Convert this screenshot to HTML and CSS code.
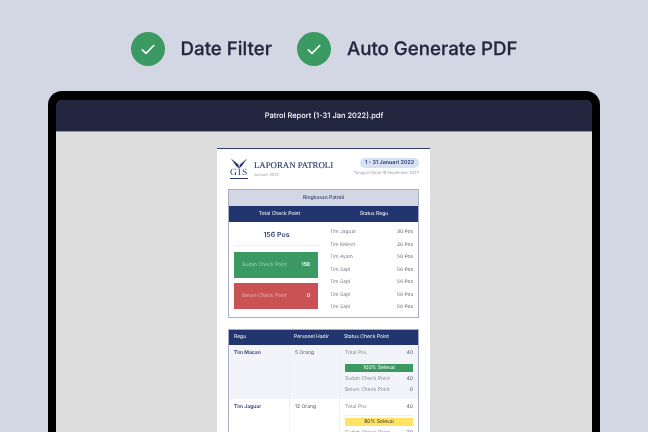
FILE: index.html
```html
<!DOCTYPE html>
<html lang="id">
<head>
<meta charset="utf-8">
<title>Patrol Report</title>
<link rel="stylesheet" href="styles.css">
</head>
<body>
<div class="page">
  <div class="features">
    <div class="feature">
      <svg class="check" viewBox="0 0 34 34"><circle cx="17" cy="17" r="17" fill="#3a9a62"/><path d="M10.800 17.300l4.200 4 8.200-8.300" fill="none" stroke="#fff" stroke-width="1.600"/></svg>
      <span>Date Filter</span>
    </div>
    <div class="feature">
      <svg class="check" viewBox="0 0 34 34"><circle cx="17" cy="17" r="17" fill="#3a9a62"/><path d="M10.800 17.300l4.200 4 8.200-8.300" fill="none" stroke="#fff" stroke-width="1.600"/></svg>
      <span>Auto Generate PDF</span>
    </div>
  </div>
  <div class="device">
    <div class="titlebar"><span>Patrol Report (1-31 Jan 2022).pdf</span></div>
    <div class="viewer">
      <div class="paper">
        <div class="doc-head">
          <div class="logo">
            <svg class="wings" viewBox="0 0 20 11"><path d="M1 0l8.500 6.500L10 11 7 8.500zM19 0l-8 6.500L10 11l3-2.500z" fill="#2b3a75"/></svg>
            <div class="logo-text">GIS</div>
          </div>
          <div class="doc-title">
            <div class="doc-name">LAPORAN PATROLI</div>
            <div class="doc-sub">Januari 2022</div>
          </div>
          <div class="doc-date">
            <div class="pill">1 - 31 Januari 2022</div>
            <div class="doc-sub">Tanggal Cetak 19 September 2022</div>
          </div>
        </div>
        <div class="summary">
          <div class="summary-title">Ringkasan Patroli</div>
          <div class="summary-head"><span>Total Check Point</span><span>Status Regu</span></div>
          <div class="summary-body">
            <div class="totals">
              <div class="total">156 Pos</div>
              <div class="stat stat-done"><span>Sudah Check Point</span><b>156</b></div>
              <div class="stat stat-todo"><span>Belum Check Point</span><b>0</b></div>
            </div>
            <div class="teams">
              <div class="team"><span>Tim Jaguar</span><span>30 Pos</span></div>
              <div class="team"><span>Tim Kelinci</span><span>20 Pos</span></div>
              <div class="team"><span>Tim Ayam</span><span>50 Pos</span></div>
              <div class="team"><span>Tim Sapi</span><span>56 Pos</span></div>
              <div class="team"><span>Tim Sapi</span><span>56 Pos</span></div>
              <div class="team"><span>Tim Sapi</span><span>56 Pos</span></div>
              <div class="team"><span>Tim Sapi</span><span>56 Pos</span></div>
            </div>
          </div>
        </div>
        <div class="detail">
          <div class="detail-row detail-head"><div>Regu</div><div>Personel Hadir</div><div>Status Check Point</div></div>
          <div class="detail-row shaded">
            <div class="name">Tim Macan</div>
            <div>5 Orang</div>
            <div class="status">
              <div class="line line-total"><span>Total Pos</span><i>40</i></div>
              <div class="bar bar-green">100% Selesai</div>
              <div class="line"><span>Sudah Check Point</span><i>40</i></div>
              <div class="line"><span>Belum Check Point</span><i>0</i></div>
            </div>
          </div>
          <div class="detail-row">
            <div class="name">Tim Jaguar</div>
            <div>12 Orang</div>
            <div class="status">
              <div class="line line-total"><span>Total Pos</span><i>40</i></div>
              <div class="bar bar-yellow">80% Selesai</div>
              <div class="line"><span>Sudah Check Point</span><i>30</i></div>
            </div>
          </div>
        </div>
      </div>
    </div>
  </div>
</div>
</body>
</html>
```
FILE: styles.css
```css
* { box-sizing: border-box; }
html, body { margin: 0; height: 100%; overflow: hidden; }
body { background: #d3d7e4; font-family: Inter, "Noto Sans", sans-serif; text-rendering: geometricPrecision; }
.page { height: 432px; overflow: hidden; display: flex; flex-direction: column; align-items: center; }

.features { display: flex; flex: none; gap: 25px; padding-top: 32px; height: 91px; }
.feature { display: flex; align-items: flex-start; gap: 16px; font-size: 18.700px; font-weight: 500; color: #23263f; line-height: 34px; }
.feature span { filter: blur(.15px); -webkit-text-stroke: .25px #23263f; }
.check { width: 34px; height: 34px; display: block; }

.device { width: 552px; flex: none; height: 341px; overflow: hidden; background: #000; border: 8px solid #000; border-bottom: 0; border-radius: 14px 14px 0 0; }
.titlebar { height: 32px; margin-top: 1px; background: #23263f; border-radius: 5px 5px 0 0; color: #fff; font-size: 7.500px; font-weight: 500; display: flex; align-items: center; justify-content: center; border-bottom: 1px solid #8f92a0; }
.titlebar span { filter: blur(.2px); }
.viewer { background: #dcdcdc; height: 400px; padding-top: 16px; display: flex; justify-content: center; }

.paper { width: 213px; margin-right: 1px; height: 400px; background: #fff; border-top: 1px solid #2b3a75; padding: 9px 11px 0; color: #2b3a75; filter: blur(.3px); }
.doc-head { display: flex; align-items: flex-start; height: 31px; }
.logo { width: 18px; margin-left: 2px; display: flex; flex-direction: column; align-items: center; }
.wings { width: 18px; height: 11px; display: block; }
.logo-text { font-family: "Liberation Serif", serif; font-size: 9.500px; line-height: 9px; letter-spacing: 1px; border-bottom: 1px solid #2b3a75; width: 18px; text-align: center; }
.doc-title { margin-left: 6px; flex: 1; padding-top: 2px; }
.doc-name { font-family: "Liberation Serif", serif; font-size: 8.800px; line-height: 10px; -webkit-text-stroke: .15px #2b3a75; }
.doc-sub { font-size: 4px; line-height: 6px; color: #a0a3ad; margin-top: 2px; }
.doc-date { display: flex; flex-direction: column; align-items: flex-end; }
.pill { background: #d6e1f3; border-radius: 5px; height: 10px; width: 59px; font-size: 5.400px; font-weight: 600; line-height: 10px; text-align: center; }

.summary { border: 1px solid #a8aec8; height: 129px; }
.summary-title { height: 16px; background: #d3d7e4; font-size: 5px; font-weight: 500; line-height: 16px; text-align: center; }
.summary-head { height: 16px; background: #22356f; color: #fff; font-size: 5px; line-height: 16px; display: grid; grid-template-columns: 101px 1fr; text-align: center; }
.summary-body { display: grid; grid-template-columns: 101px 1fr; }
.totals { padding: 0 0 0 5px; }
.total { height: 24px; margin-right: 11px; font-size: 7px; font-weight: 600; text-align: center; line-height: 26px; border-bottom: 1px solid #eef0f4; margin-bottom: 6px; }
.stat { height: 26px; width: 84px; display: flex; justify-content: space-between; align-items: center; padding: 0 8px; font-size: 5px; color: #fff; margin-bottom: 5px; }
.stat span { opacity: .5; }
.stat b { font-weight: 600; }
.stat-done { background: #3a9a62; }
.stat-todo { background: #ca5254; }
.teams { padding: 4px 5px 0 0; }
.team { height: 12.500px; display: flex; justify-content: space-between; align-items: center; font-size: 4.900px; color: #7d808c; }
.team span:last-child { color: #5d606c; }

.detail { border: 1px solid #a8aec8; border-bottom: 0; margin-top: 11px; font-size: 5px; line-height: 8px; color: #5d606c; }
.detail-row { display: grid; grid-template-columns: 60px 50px 1fr; }
.detail-row > div { padding: 4px 5px; }
.detail-row > div + div { border-left: 1px solid #eef0f4; }
.detail-head { background: #22356f; color: #fff; height: 15px; }
.detail-head > div { border: 0 !important; padding-top: 3px; }
.shaded { background: #f2f4f9; height: 54px; }
.name { color: #2b3a75; font-weight: 600; }
.status { padding-right: 5px !important; }
.line { display: flex; justify-content: space-between; height: 11px; color: #8b8e9a; }
.line i { font-style: normal; color: #5d606c; }
.line-total { border-bottom: 1px solid #eef0f4; height: 13px; margin-bottom: 2px; }
.bar { height: 8px; text-align: center; margin-bottom: 3px; }
.bar-green { background: #3a9a62; color: #fff; }
.bar-yellow { background: #ffe364; color: #33363f; }
```
